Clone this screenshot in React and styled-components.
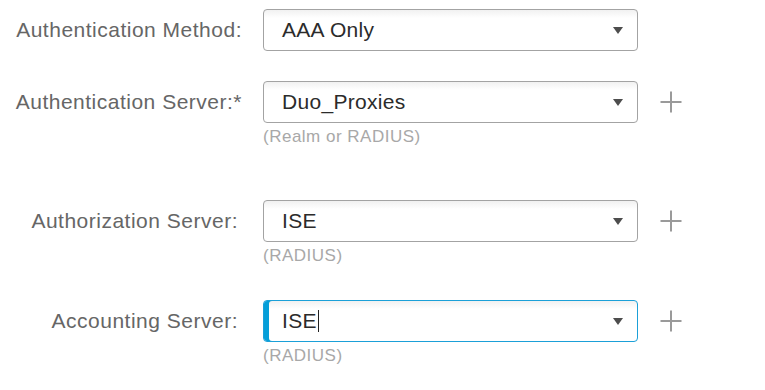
import React from 'react';
import styled, { createGlobalStyle, css } from 'styled-components';

const GlobalStyle = createGlobalStyle`
  html, body {
    margin: 0;
    padding: 0;
    background: #ffffff;
  }
  body {
    font-family: 'Liberation Sans', Arial, sans-serif;
  }
`;

const Form = styled.div`
  padding: 9px 0 0 0;
  width: 765px;
  height: 390px;
  box-sizing: border-box;
  overflow: hidden;
`;

const Row = styled.div`
  display: flex;
  align-items: flex-start;
  margin-bottom: ${props => props.$spacing || 0}px;
`;

const Label = styled.div`
  width: ${props => props.$width}px;
  flex: none;
  text-align: right;
  height: 42px;
  line-height: 42px;
  font-size: 21px;
  letter-spacing: 0.5px;
  color: #666666;
  white-space: nowrap;
`;

const Control = styled.div`
  width: 375px;
  flex: none;
  margin-left: ${props => props.$offset}px;
`;

const SelectBox = styled.div`
  position: relative;
  height: 42px;
  box-sizing: border-box;
  border: 1px solid #a3a3a3;
  border-radius: 4px;
  background: linear-gradient(to bottom, #f1f1f1 0px, #ffffff 8px);
  display: flex;
  align-items: center;
  padding-left: 18px;
  font-size: 21px;
  letter-spacing: 0.3px;
  color: #2b2b2b;

  ${props => props.$focused && css`
    border-color: #1ba0d8;
    box-shadow: inset 5px 0 0 #049fd9;
  `}
`;

const Caret = styled.span`
  position: absolute;
  right: 14px;
  top: 50%;
  margin-top: -3px;
  width: 0;
  height: 0;
  border-left: 5px solid transparent;
  border-right: 5px solid transparent;
  border-top: 7px solid #4d4d4d;
`;

const Cursor = styled.span`
  display: inline-block;
  width: 1px;
  height: 22px;
  background: #222222;
  margin-left: 1px;
`;

const Hint = styled.div`
  margin-top: 4px;
  font-size: 17px;
  letter-spacing: 0.5px;
  color: #a8a8a8;
  line-height: 20px;
`;

const AddButton = styled.button`
  flex: none;
  margin-left: 22px;
  margin-top: 10px;
  width: 22px;
  height: 22px;
  padding: 0;
  border: none;
  background: transparent;
  display: flex;
  align-items: center;
  justify-content: center;
`;

const PlusIcon = () => (
  <svg width="22" height="22" viewBox="0 0 22 22">
    <path d="M11 0.5V21.5M0.5 11H21.5" stroke="#9a9a9a" strokeWidth="2" fill="none" />
  </svg>
);

const Field = ({ label, labelWidth, offset, value, hint, add, focused, spacing }) => (
  <Row $spacing={spacing}>
    <Label $width={labelWidth}>{label}</Label>
    <Control $offset={offset}>
      <SelectBox $focused={focused}>
        {value}
        {focused && <Cursor />}
        <Caret />
      </SelectBox>
      {hint && <Hint>{hint}</Hint>}
    </Control>
    {add && (
      <AddButton aria-label="Add">
        <PlusIcon />
      </AddButton>
    )}
  </Row>
);

export default function App() {
  return (
    <>
      <GlobalStyle />
      <Form>
        <Field label="Authentication Method:" labelWidth={242} offset={21} value="AAA Only" spacing={30} />
        <Field
          label="Authentication Server:*"
          labelWidth={242}
          offset={21}
          value="Duo_Proxies"
          hint="(Realm or RADIUS)"
          add
          spacing={53}
        />
        <Field
          label="Authorization Server:"
          labelWidth={238}
          offset={25}
          value="ISE"
          hint="(RADIUS)"
          add
          spacing={34}
        />
        <Field
          label="Accounting Server:"
          labelWidth={238}
          offset={25}
          value="ISE"
          hint="(RADIUS)"
          add
          focused
        />
      </Form>
    </>
  );
}
